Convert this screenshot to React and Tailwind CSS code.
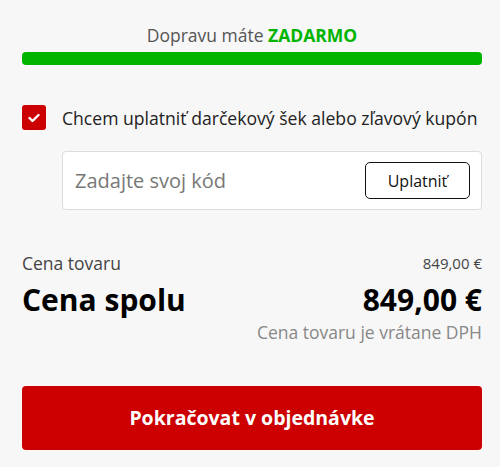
export default function App() {
  return (
    <div className="min-h-[467px] bg-[#f7f7f7] pl-[22px] pr-[18px] pt-[22px] font-['Open_Sans',sans-serif]">
      <div className="text-center text-[17.5px] leading-[26px] text-[#555]">
        Dopravu máte <span className="font-bold text-[#00b400]">ZADARMO</span>
      </div>
      <div className="mt-[4px] h-[13px] rounded-[4px] bg-[#00b400]"></div>

      <label className="mt-[40px] flex items-center gap-[16px]">
        <span className="flex h-[25px] w-[24px] items-center justify-center rounded-[3px] bg-[#cc0000]">
          <svg width="12" height="10" viewBox="0 0 12 10" fill="none">
            <path d="M1.5 5l3 3 6-6" stroke="white" strokeWidth="2.4" strokeLinecap="round" strokeLinejoin="round" />
          </svg>
        </span>
        <span className="text-[17.6px] leading-[24px] text-[#222]">
          Chcem uplatniť darčekový šek alebo zľavový kupón
        </span>
      </label>

      <div className="ml-[40px] mt-[21px] flex h-[59px] items-center justify-between rounded-[4px] border border-[#dcdcdc] bg-white pl-[12px] pr-[11px]">
        <span className="text-[20px] text-[#777]">Zadajte svoj kód</span>
        <button className="h-[37px] w-[105px] rounded-[5px] border border-[#111] bg-white text-[16px] text-[#111]">
          Uplatniť
        </button>
      </div>

      <div className="mt-[40px] flex items-center justify-between">
        <span className="text-[17.5px] leading-[26px] text-[#444]">Cena tovaru</span>
        <span className="text-[15px] text-[#444]">849,00 €</span>
      </div>
      <div className="mt-[6px] flex items-center justify-between text-[30px] font-bold leading-[36px] text-black">
        <span>Cena spolu</span>
        <span>849,00 €</span>
      </div>
      <div className="mt-[2px] text-right text-[17.5px] leading-[24px] text-[#888]">
        Cena tovaru je vrátane DPH
      </div>

      <button className="mt-[42px] flex h-[64px] w-full items-center justify-center rounded-[4px] bg-[#cc0000] text-[19.5px] font-bold text-white">
        Pokračovat v objednávke
      </button>
    </div>
  );
}
